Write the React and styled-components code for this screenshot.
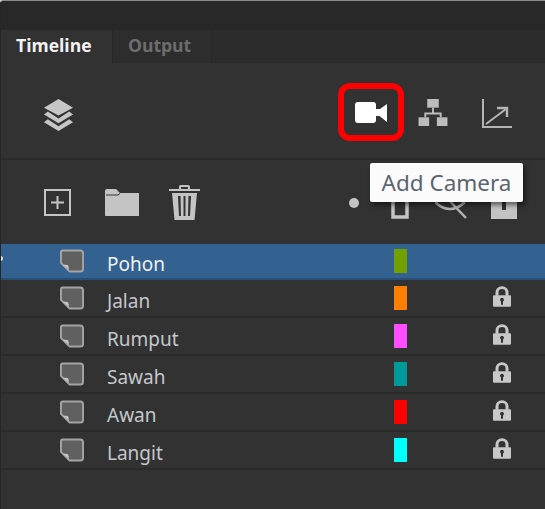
import React from "react";
import styled, { createGlobalStyle } from "styled-components";

const GlobalStyle = createGlobalStyle`
  html, body {
    margin: 0;
    padding: 0;
    background: #d8d8d8;
  }
`;

const Panel = styled.div`
  position: relative;
  width: 545px;
  height: 509px;
  overflow: hidden;
  background: #323232;
  border-top: 1px solid #8a8a8a;
  border-left: 1px solid #262626;
  border-top-left-radius: 4px;
  box-sizing: border-box;
  font-family: "Open Sans", "Noto Sans", sans-serif;
`;

const TitleBar = styled.div`
  height: 29px;
  background: #282828;
`;

const TabRow = styled.div`
  display: flex;
  height: 33px;
  background: #2c2c2c;
`;

const Tab = styled.div`
  box-sizing: border-box;
  width: ${(p) => p.$width}px;
  padding-left: ${(p) => p.$pad}px;
  padding-top: 4px;
  font-size: 17.5px;
  font-weight: 700;
  line-height: 23px;
  color: ${(p) => (p.$active ? "#f2f2f2" : "#6d6d6d")};
  background: ${(p) => (p.$active ? "#323232" : "#2d2d2d")};
  border-right: 1px solid #272727;
`;

const TopTools = styled.div`
  display: flex;
  align-items: center;
  height: 97px;
  padding: 3px 33px 0 42px;
  border-bottom: 2px solid #2b2b2b;
  box-sizing: border-box;
`;

const ToolGroup = styled.div`
  display: flex;
  align-items: center;
  margin-left: auto;
`;

const CameraButton = styled.div`
  display: flex;
  align-items: center;
  justify-content: center;
  box-sizing: border-box;
  width: 66px;
  height: 58px;
  margin-right: 14px;
  border: 6px solid #ff0000;
  border-radius: 12px;
`;

const TreeSlot = styled.div`
  display: flex;
  margin-right: 34px;
`;

const LayerTools = styled.div`
  display: flex;
  align-items: center;
  height: 84px;
  padding-left: 43px;
  box-sizing: border-box;
`;

const ActionIcons = styled.div`
  display: grid;
  grid-template-columns: 61px 64px auto;
  align-items: center;
`;

const HeaderMarks = styled.div`
  display: grid;
  grid-template-columns: 42px 44px 56px 26px;
  align-items: end;
  justify-items: start;
  margin-left: auto;
  margin-right: 28px;
  padding-top: 6px;
`;

const Dot = styled.span`
  display: block;
  width: 10px;
  height: 10px;
  margin-bottom: 11px;
  border-radius: 50%;
  background: #c4c4c4;
`;

const Tip = styled.div`
  position: absolute;
  left: 369px;
  top: 162px;
  width: 153px;
  height: 39px;
  display: flex;
  align-items: center;
  justify-content: center;
  background: #fbfbfb;
  border-radius: 2px;
  box-shadow: 2px 3px 5px rgba(0, 0, 0, 0.55);
  color: #5c6470;
  font-size: 22.5px;
  font-family: "Noto Sans", "Open Sans", sans-serif;
  white-space: nowrap;
`;

const EdgeHandle = styled.span`
  position: absolute;
  left: -1px;
  top: 255px;
  width: 3px;
  height: 5px;
  border-radius: 0 3px 3px 0;
  background: #e2e2e2;
`;

const LayerList = styled.div`
  display: flex;
  flex-direction: column;
`;

const Row = styled.div`
  display: grid;
  grid-template-columns: 59px 24px 23px 287px 20px 79px 18px;
  align-items: center;
  height: ${(p) => (p.$selected ? 36 : 38)}px;
  box-sizing: border-box;
  background: ${(p) => (p.$selected ? "#336190" : "transparent")};
  border-bottom: 2px solid ${(p) => (p.$selected ? "#2a4f76" : "#2b2b2b")};
`;

const LayerName = styled.span`
  grid-column: 4;
  padding-top: 5px;
  font-size: 19px;
  line-height: 24px;
  font-family: "Noto Sans", "Open Sans", sans-serif;
  color: ${(p) => (p.$selected ? "#f0f3f7" : "#c4c8cc")};
`;

const Swatch = styled.span`
  grid-column: 5;
  display: block;
  width: 13px;
  height: 24px;
  background: ${(p) => p.$color};
`;

const Icon = styled.svg`
  display: block;
  flex: none;
  margin-top: ${(p) => p.$top || 0}px;
`;

function LayersIcon() {
  return (
    <Icon $top={4} width="31" height="33" viewBox="0 0 32 34">
      <path d="M16 1 L31 10 L16 18 L1 10 Z" fill="#c6c6c6" />
      <path d="M5 14 L16 21 L27 14 L31 17 L16 26 L1 17 Z" fill="#c6c6c6" />
      <path d="M5 22 L16 29 L27 22 L31 25 L16 34 L1 25 Z" fill="#c6c6c6" />
    </Icon>
  );
}

function CameraIcon() {
  return (
    <Icon width="32" height="21" viewBox="0 0 32 21">
      <rect x="0" y="0" width="21" height="21" rx="3" fill="#ffffff" />
      <path d="M20 10.5 L32 2 V20 Z M20 7 H25 V14 H20 Z" fill="#ffffff" />
    </Icon>
  );
}

function TreeIcon() {
  return (
    <Icon width="30" height="27" viewBox="0 0 30 28" fill="#bcbcbc">
      <rect x="9" y="0" width="12" height="9" />
      <rect x="0" y="19" width="11" height="9" />
      <rect x="19" y="19" width="11" height="9" />
      <path d="M14 9h2v5h8v5h-2v-3H8v3H6v-5h8z" />
    </Icon>
  );
}

function GraphIcon() {
  return (
    <Icon $top={3} width="30" height="29" viewBox="0 0 30 29" fill="none" stroke="#b4b4b4" strokeWidth="2">
      <path d="M1 0 V28 H30" />
      <path d="M4 25 L24 10" />
      <path d="M15 9 H25 V18" strokeWidth="2.4" />
    </Icon>
  );
}

function NewLayerIcon() {
  return (
    <Icon width="27" height="27" viewBox="0 0 27 27" fill="none" stroke="#c4c4c4" strokeWidth="2">
      <rect x="1" y="1" width="25" height="25" />
      <path d="M13.5 7 V20 M7 13.5 H20" />
    </Icon>
  );
}

function FolderIcon() {
  return (
    <Icon width="34" height="27" viewBox="0 0 34 27">
      <path d="M0 2 Q0 0 2 0 H11 L15 4 H34 V27 H1 Q0 27 0 26 Z" fill="#c4c4c4" />
      <path d="M1 6 H13 L15 4.5" fill="none" stroke="#323232" strokeWidth="1" />
    </Icon>
  );
}

function TrashIcon() {
  return (
    <Icon width="31" height="35" viewBox="0 0 31 35" fill="#c4c4c4">
      <path d="M10 4 V1.5 Q10 0 12 0 H19 Q21 0 21 1.5 V4 H31 V6 H0 V4 Z M12 4 H19 V2 H12 Z" fillRule="evenodd" />
      <path
        d="M3 8 H28 L25.5 35 H5.5 Z M9 11 L10 31 H12 L11.5 11 Z M14.5 11 V31 H16.5 V11 Z M19.5 11 L19 31 H21 L22 11 Z"
        fillRule="evenodd"
      />
    </Icon>
  );
}

function OutlineIcon() {
  return (
    <Icon width="18" height="28" viewBox="0 0 18 28" fill="none" stroke="#c4c4c4" strokeWidth="3.5">
      <rect x="2" y="2" width="14" height="24" />
    </Icon>
  );
}

function EyeOffIcon() {
  return (
    <Icon width="34" height="28" viewBox="0 0 34 28" fill="none" stroke="#b4b4b4" strokeWidth="2.5">
      <path d="M1 12 Q15 -4 29 12 Q15 24 1 12 Z" />
      <path d="M8 3 L31 27" />
    </Icon>
  );
}

function LockHeadIcon() {
  return (
    <Icon width="26" height="28" viewBox="0 0 26 28" fill="#c4c4c4">
      <path d="M0 0 H26 V28 H0 Z M11 11 V19 H15 V11 Z" fillRule="evenodd" />
    </Icon>
  );
}

function NoteIcon() {
  return (
    <Icon width="24" height="24" viewBox="0 0 25 24">
      <path
        d="M3 1 H21 Q24 1 24 4 V20 Q24 23 21 23 H10 L1 14 V3 Q1 1 3 1 Z"
        fill="#606060"
        stroke="#a4a4a4"
        strokeWidth="2"
        strokeLinejoin="round"
      />
      <path d="M3 16 H6.5 Q9 16 9 18.5 V21 Z" fill="#c4c4c4" />
    </Icon>
  );
}

function LockIcon() {
  return (
    <Icon $top={-3} width="18" height="23" viewBox="0 1.5 18 20.5" fill="#c8c8c8">
      <path d="M2.5 11 V7.5 A6.5 6 0 0 1 15.5 7.5 V11 H12.5 V7.5 A3.5 3.2 0 0 0 5.5 7.5 V11 Z" />
      <path
        d="M1 10.5 H17 Q18 10.5 18 11.5 V21 Q18 22 17 22 H1 Q0 22 0 21 V11.5 Q0 10.5 1 10.5 Z M9 13 A2 2 0 0 0 8 16.7 V20 H10 V16.7 A2 2 0 0 0 9 13 Z"
        fillRule="evenodd"
      />
    </Icon>
  );
}

const layers = [
  { name: "Pohon", color: "#72a000", selected: true },
  { name: "Jalan", color: "#ff8000", locked: true },
  { name: "Rumput", color: "#ff4dff", locked: true },
  { name: "Sawah", color: "#009999", locked: true },
  { name: "Awan", color: "#ff0000", locked: true },
  { name: "Langit", color: "#00ffff", locked: true },
];

export default function App() {
  return (
    <Panel>
      <GlobalStyle />
      <TitleBar />
      <TabRow>
        <Tab $active $width={112} $pad={15}>Timeline</Tab>
        <Tab $width={99} $pad={15}>Output</Tab>
      </TabRow>
      <TopTools>
        <LayersIcon />
        <ToolGroup>
          <CameraButton>
            <CameraIcon />
          </CameraButton>
          <TreeSlot>
            <TreeIcon />
          </TreeSlot>
          <GraphIcon />
        </ToolGroup>
      </TopTools>
      <LayerTools>
        <ActionIcons>
          <NewLayerIcon />
          <FolderIcon />
          <TrashIcon />
        </ActionIcons>
        <HeaderMarks>
          <Dot />
          <OutlineIcon />
          <EyeOffIcon />
          <LockHeadIcon />
        </HeaderMarks>
      </LayerTools>
      <LayerList>
        {layers.map((layer) => (
          <Row key={layer.name} $selected={layer.selected}>
            <span />
            <NoteIcon />
            <span />
            <LayerName $selected={layer.selected}>{layer.name}</LayerName>
            <Swatch $color={layer.color} />
            <span />
            {layer.locked ? <LockIcon /> : <span />}
          </Row>
        ))}
      </LayerList>
      <EdgeHandle />
      <Tip>Add Camera</Tip>
    </Panel>
  );
}
